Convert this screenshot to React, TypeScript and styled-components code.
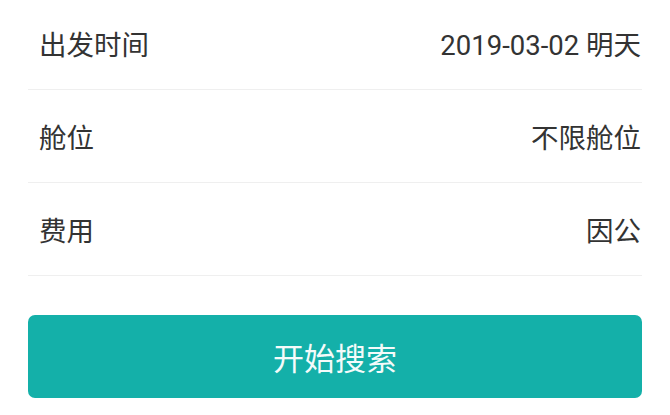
import React from "react";
import styled, { createGlobalStyle } from "styled-components";

const GlobalStyle = createGlobalStyle`
  html, body {
    margin: 0;
    padding: 0;
    background: #ffffff;
  }
  body {
    font-family: Roboto, "Noto Sans CJK SC", sans-serif;
    color: #333333;
  }
`;

const Page = styled.div`
  width: 670px;
  height: 415px;
  overflow: hidden;
  background: #ffffff;
  display: flex;
  flex-direction: column;
`;

const List = styled.div`
  margin-top: -3px;
  display: flex;
  flex-direction: column;
`;

const Row = styled.div`
  height: 92px;
  margin: 0 28px;
  padding: 0 1px 0 11px;
  border-bottom: 1px solid #efefef;
  display: flex;
  align-items: center;
  justify-content: space-between;
`;

const Label = styled.span`
  font-size: 27.5px;
  color: #333333;
  font-family: Roboto, "Noto Sans CJK SC", sans-serif;
`;

const Value = styled.span`
  font-size: 27.5px;
  color: #333333;
  font-family: Roboto, "Noto Sans CJK SC", sans-serif;
`;

const ButtonWrap = styled.div`
  padding: 39px 28px 0 28px;
`;

const SearchButton = styled.button`
  width: 100%;
  height: 83px;
  border: none;
  border-radius: 7px;
  background: #14b0a9;
  color: #f4fbfa;
  font-size: 31px;
  font-family: Roboto, "Noto Sans CJK SC", sans-serif;
  display: flex;
  align-items: center;
  justify-content: center;
  cursor: pointer;
`;

const rows = [
  { label: "出发时间", value: "2019-03-02 明天" },
  { label: "舱位", value: "不限舱位" },
  { label: "费用", value: "因公" },
];

export default function App() {
  return (
    <>
      <GlobalStyle />
      <Page>
        <List>
          {rows.map((r) => (
            <Row key={r.label}>
              <Label>{r.label}</Label>
              <Value>{r.value}</Value>
            </Row>
          ))}
        </List>
        <ButtonWrap>
          <SearchButton>开始搜索</SearchButton>
        </ButtonWrap>
      </Page>
    </>
  );
}
